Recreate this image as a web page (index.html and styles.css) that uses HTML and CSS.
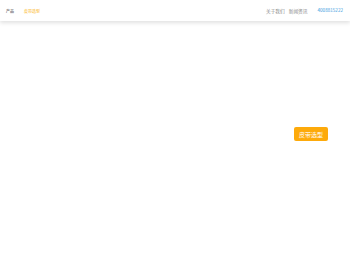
FILE: index.html
```html
<!DOCTYPE html>
<html lang="zh">
<head>
  <meta charset="UTF-8">
  <title>皮带选型</title>
  <link rel="stylesheet" href="styles.css">
</head>
<body>
  <div class="header">
    <div class="nav-left">
      <a class="nav-link" href="#">产品</a>
      <a class="nav-link active" href="#">皮带选型</a>
    </div>
    <div class="nav-right">
      <a class="nav-link muted" href="#">关于我们</a>
      <a class="nav-link muted" href="#">新闻资讯</a>
      <span class="phone">4008815222</span>
    </div>
  </div>

  <div class="main">
    <button class="select-button">皮带选型</button>
  </div>
</body>
</html>
```

FILE: styles.css
```css
body {
  margin: 0;
  background: #fff;
  font-family: "Noto Sans CJK SC", "Noto Sans", sans-serif;
}

.header {
  display: flex;
  justify-content: space-between;
  align-items: center;
  height: 21px;
  padding: 0 7px 0 6px;
  background: #fff;
  box-shadow: 0 2px 4px rgba(0, 0, 0, 0.12);
}

.nav-left,
.nav-right {
  display: flex;
  align-items: center;
}

.nav-link {
  font-size: 4px;
  color: #333;
  text-decoration: none;
  margin-right: 10px;
}

.nav-link.active {
  color: #fbb416;
}

.nav-right .nav-link {
  font-size: 4.7px;
  margin-right: 4px;
}

.nav-link.muted {
  color: #888;
}

.nav-right .nav-link:nth-child(2) {
  margin-right: 10px;
}

.phone {
  font-size: 4.6px;
  color: #3a9be0;
  margin-top: -2px;
}

.main {
  display: flex;
  justify-content: flex-end;
  padding: 106px 22px 0 0;
}

.select-button {
  background: #fdaa0b;
  color: #fff;
  border: none;
  border-radius: 2px;
  padding: 0 4px;
  height: 14px;
  width: 34px;
  font-family: inherit;
  font-size: 6px;
  cursor: pointer;
}
```
